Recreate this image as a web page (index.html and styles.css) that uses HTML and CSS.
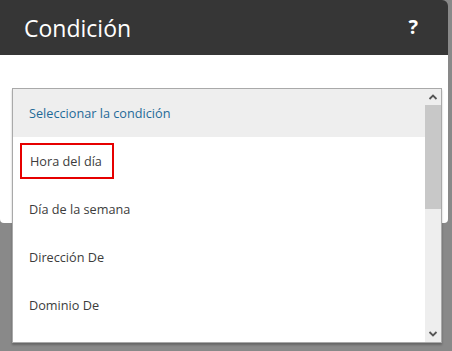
FILE: index.html
```html
<!DOCTYPE html>
<html lang="es">
<head>
<meta charset="utf-8">
<link rel="stylesheet" href="styles.css">
</head>
<body>
<div class="page">
  <div class="dialog">
    <div class="header">
      <span class="title">Condición</span>
      <span class="help">?</span>
    </div>
    <div class="content"></div>
  </div>
  <div class="listbox">
    <ul class="options">
      <li class="opt selected">Seleccionar la condición</li>
      <li class="opt"><span class="mark">Hora del día</span></li>
      <li class="opt">Día de la semana</li>
      <li class="opt">Dirección De</li>
      <li class="opt">Dominio De</li>
    </ul>
    <div class="scrollbar">
      <svg class="arrow" width="16" height="16" viewBox="0 0 16 16"><path d="M4.5 10 L8 6.5 L11.5 10" fill="none" stroke="#555" stroke-width="1.8"/></svg>
      <div class="thumb"></div>
      <div class="track"></div>
      <svg class="arrow" width="16" height="16" viewBox="0 0 16 16"><path d="M4.5 6 L8 9.5 L11.5 6" fill="none" stroke="#555" stroke-width="1.8"/></svg>
    </div>
  </div>
</div>
</body>
</html>
```
FILE: styles.css
```css
html, body {
  margin: 0;
  padding: 0;
}
body {
  background: #898989;
  width: 452px;
  height: 351px;
  overflow: hidden;
  font-family: "Open Sans", "Noto Sans", sans-serif;
}
.page {
  position: relative;
  width: 452px;
  height: 351px;
}
.dialog {
  width: 448px;
  display: flex;
  flex-direction: column;
}
.header {
  height: 55px;
  background: #363636;
  border-top-right-radius: 6px;
  display: flex;
  align-items: center;
  justify-content: space-between;
  padding: 0 30px 0 24px;
  color: #fff;
}
.title {
  font-size: 23px;
  margin-top: 1px;
}
.help {
  font-size: 20px;
  font-weight: 700;
  margin-top: -2px;
}
.content {
  height: 168px;
  background: #fff;
  border-bottom-left-radius: 4px;
  border-bottom-right-radius: 4px;
}
.listbox {
  position: absolute;
  left: 12px;
  top: 88px;
  width: 428px;
  height: 253px;
  border: 1px solid #a9a9a9;
  background: #fff;
  display: flex;
  box-shadow: 0 2px 2px rgba(0,0,0,0.25);
  overflow: hidden;
}
.options {
  list-style: none;
  margin: 0;
  padding: 0;
  flex: 1;
}
.opt {
  height: 48px;
  display: flex;
  align-items: center;
  padding-left: 16px;
  font-size: 12.7px;
  color: #3c3c3c;
}
.opt.selected {
  background: #eeeeee;
  color: #1f6a98;
}
.mark {
  border: 2px solid #e60000;
  margin-left: -9px;
  padding: 7px 10px 7px 8px;
}
.scrollbar {
  width: 16px;
  background: #eeeeee;
  display: flex;
  flex-direction: column;
}
.arrow {
  display: block;
  flex: none;
}
.thumb {
  height: 104px;
  background: #c8c8c8;
  flex: none;
}
.track {
  flex: 1;
}
```
